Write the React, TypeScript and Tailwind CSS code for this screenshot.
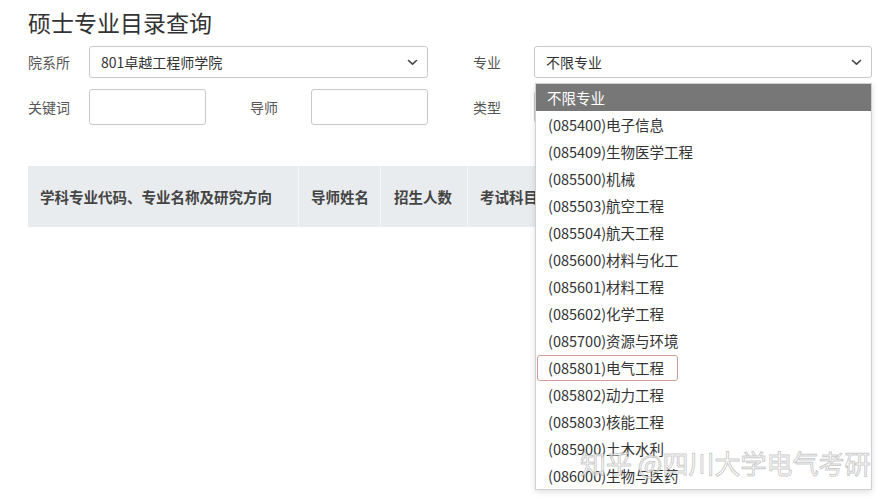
import React from "react";

const majors = [
  "不限专业",
  "(085400)电子信息",
  "(085409)生物医学工程",
  "(085500)机械",
  "(085503)航空工程",
  "(085504)航天工程",
  "(085600)材料与化工",
  "(085601)材料工程",
  "(085602)化学工程",
  "(085700)资源与环境",
  "(085801)电气工程",
  "(085802)动力工程",
  "(085803)核能工程",
  "(085900)土木水利",
  "(086000)生物与医药",
];

function Chevron() {
  return (
    <svg width="11" height="7" viewBox="0 0 11 7" fill="none">
      <path d="M1.5 1.5 L5.5 5.2 L9.5 1.5" stroke="#444" strokeWidth="1.6" strokeLinecap="round" strokeLinejoin="round" />
    </svg>
  );
}

function SelectBox({ value, width }: { value: string; width: string }) {
  return (
    <div className={`${width} h-[32px] border border-[#c8c8c8] rounded-[3px] bg-white flex items-center justify-between pl-[11px] pr-[9px] text-[14px] text-[#333]`}>
      <span>{value}</span>
      <Chevron />
    </div>
  );
}

export default function App() {
  return (
    <div
      className="w-[891px] h-[500px] bg-white relative overflow-hidden"
      style={{ fontFamily: '"Noto Sans CJK SC", "Noto Sans", sans-serif' }}
    >
      <div className="pl-[28px] pt-[6px]">
        <h1 className="text-[23px] leading-[32px] text-[#333]">硕士专业目录查询</h1>

        <div className="mt-[8px] flex items-center">
          <span className="w-[61px] text-[14px] text-[#555]">院系所</span>
          <SelectBox value="801卓越工程师学院" width="w-[339px]" />
          <span className="ml-[45px] w-[61px] text-[14px] text-[#555]">专业</span>
          <div className="relative">
            <SelectBox value="不限专业" width="w-[338px]" />
            <div className="absolute left-[1px] top-[37px] w-[337px] h-[407px] bg-white border border-[#d0d0d0] shadow-[0_2px_6px_rgba(0,0,0,0.12)] z-10">
              {majors.map((m, i) => (
                <div
                  key={m}
                  className={`h-[27px] flex items-center text-[14.5px] ${
                    i === 0 ? "bg-[#777] text-white pl-[11px]" : "text-[#333] pl-[1px]"
                  }`}
                >
                  {i === 0 ? (
                    m
                  ) : i === 10 ? (
                    <span className="h-[26px] flex items-center pl-[10px] pr-[13px] border border-[#d49a9a] rounded-[3px]">{m}</span>
                  ) : (
                    <span className="pl-[11px]">{m}</span>
                  )}
                </div>
              ))}
            </div>
          </div>
        </div>

        <div className="mt-[11px] flex items-center">
          <span className="w-[61px] text-[14px] text-[#555]">关键词</span>
          <div className="w-[117px] h-[36px] border border-[#c8c8c8] rounded-[3px]" />
          <span className="ml-[44px] w-[61px] text-[14px] text-[#555]">导师</span>
          <div className="w-[117px] h-[36px] border border-[#c8c8c8] rounded-[3px]" />
          <span className="ml-[45px] w-[61px] text-[14px] text-[#555]">类型</span>
          <div className="w-[338px] h-[32px] border border-[#c8c8c8] rounded-[3px]" />
        </div>

        <div className="mt-[41px] w-[844px] h-[61px] bg-[#e9ecef] flex text-[14.5px] font-bold text-[#444]">
          <div className="w-[271px] flex items-center pl-[12px] border-r border-[#f4f5f6]">学科专业代码、专业名称及研究方向</div>
          <div className="w-[82px] flex items-center pl-[12px] border-r border-[#f4f5f6]">导师姓名</div>
          <div className="w-[87px] flex items-center pl-[13px] border-r border-[#f4f5f6]">招生人数</div>
          <div className="flex-1 flex items-center pl-[12px]">考试科目</div>
        </div>
      </div>

      <div className="absolute left-[580px] top-[445px] z-20 whitespace-nowrap text-[26px] leading-[36px] text-white/75 [-webkit-text-stroke:1px_rgba(140,140,140,0.45)]">
        知乎 @四川大学电气考研
      </div>
    </div>
  );
}
